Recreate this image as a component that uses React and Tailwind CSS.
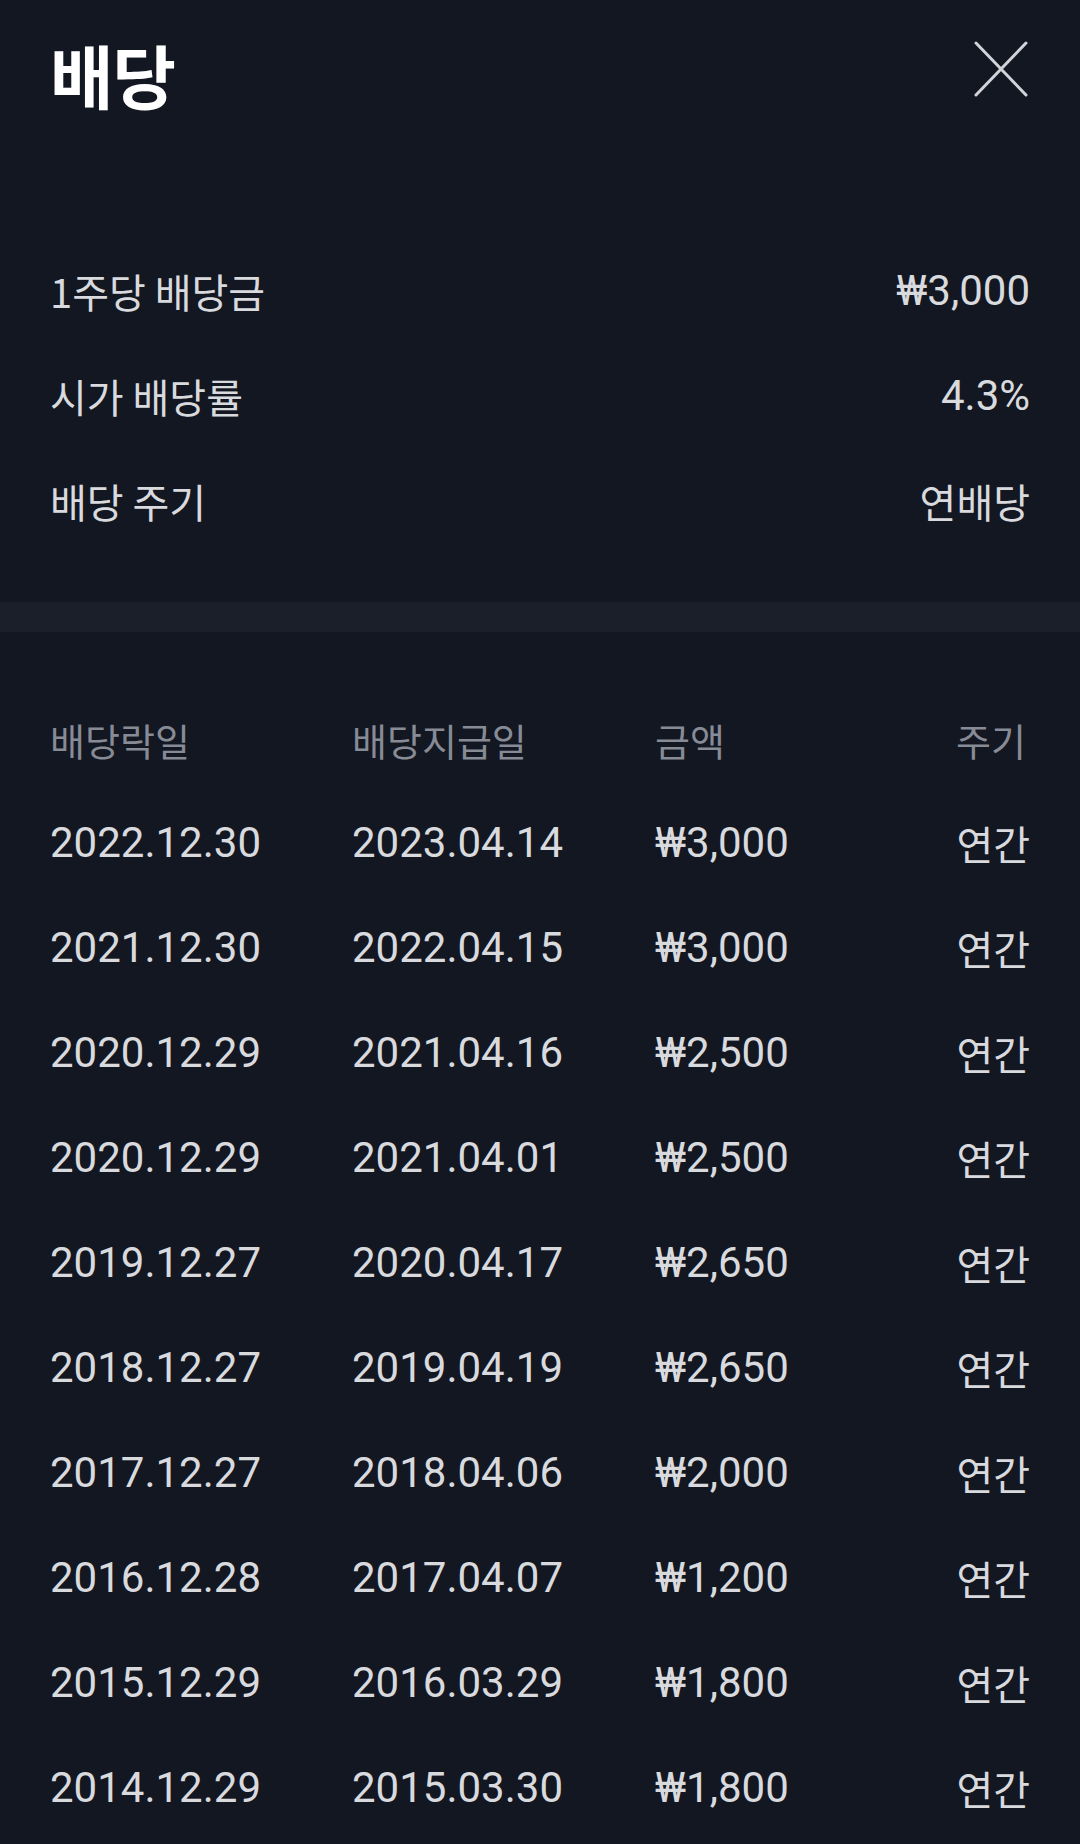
import React from "react";

const rows = [
  ["2022.12.30", "2023.04.14", "₩3,000"],
  ["2021.12.30", "2022.04.15", "₩3,000"],
  ["2020.12.29", "2021.04.16", "₩2,500"],
  ["2020.12.29", "2021.04.01", "₩2,500"],
  ["2019.12.27", "2020.04.17", "₩2,650"],
  ["2018.12.27", "2019.04.19", "₩2,650"],
  ["2017.12.27", "2018.04.06", "₩2,000"],
  ["2016.12.28", "2017.04.07", "₩1,200"],
  ["2015.12.29", "2016.03.29", "₩1,800"],
  ["2014.12.29", "2015.03.30", "₩1,800"],
];

const kr = "font-['Noto_Sans_CJK_KR',sans-serif]";
const num = "font-['Roboto','Noto_Sans_CJK_KR',sans-serif]";

export default function App() {
  return (
    <div className="w-[1080px] h-[1844px] bg-[#131722] overflow-hidden">
      <div className="h-[148px] px-[50px] flex items-center justify-between">
        <h1 className={`${kr} text-[69px] font-bold leading-none text-white tracking-[-1px]`}>배당</h1>
        <svg width="54" height="56" viewBox="0 0 54 56" className="mb-[11px] mr-[2px]">
          <path d="M2 2 L52 54 M52 2 L2 54" stroke="#d2d2d9" strokeWidth="3" strokeLinecap="round" />
        </svg>
      </div>

      <div className="pt-[90px] px-[50px]">
        {[
          ["1주당 배당금", "₩3,000", true],
          ["시가 배당률", "4.3%", true],
          ["배당 주기", "연배당", false],
        ].map(([l, v, isNum]) => (
          <div key={l} className="h-[105px] flex items-center justify-between text-[#d9dade]">
            <span className={`${kr} text-[40px] leading-none`}>{l}</span>
            <span className={isNum ? `${num} text-[42px] leading-none` : `${kr} text-[40px] leading-none`}>{v}</span>
          </div>
        ))}
      </div>

      <div className="mt-[49px] h-[30px] bg-[#1b1f29]" />

      <div className="pt-[58px] px-[50px]">
        <div className="h-[100px] grid grid-cols-[302px_303px_1fr_auto] items-center text-[#878b95]">
          <span className={`${kr} text-[38px] leading-none`}>배당락일</span>
          <span className={`${kr} text-[38px] leading-none`}>배당지급일</span>
          <span className={`${kr} text-[38px] leading-none`}>금액</span>
          <span className={`${kr} text-[38px] leading-none text-right mr-[4px]`}>주기</span>
        </div>
        {rows.map((r, i) => (
          <div key={i} className="h-[105px] grid grid-cols-[302px_303px_1fr_auto] items-center text-[#d9dade]">
            <span className={`${num} text-[42px] leading-none`}>{r[0]}</span>
            <span className={`${num} text-[42px] leading-none`}>{r[1]}</span>
            <span className={`${num} text-[42px] leading-none`}>{r[2]}</span>
            <span className={`${kr} text-[40px] leading-none text-right`}>연간</span>
          </div>
        ))}
      </div>
    </div>
  );
}
